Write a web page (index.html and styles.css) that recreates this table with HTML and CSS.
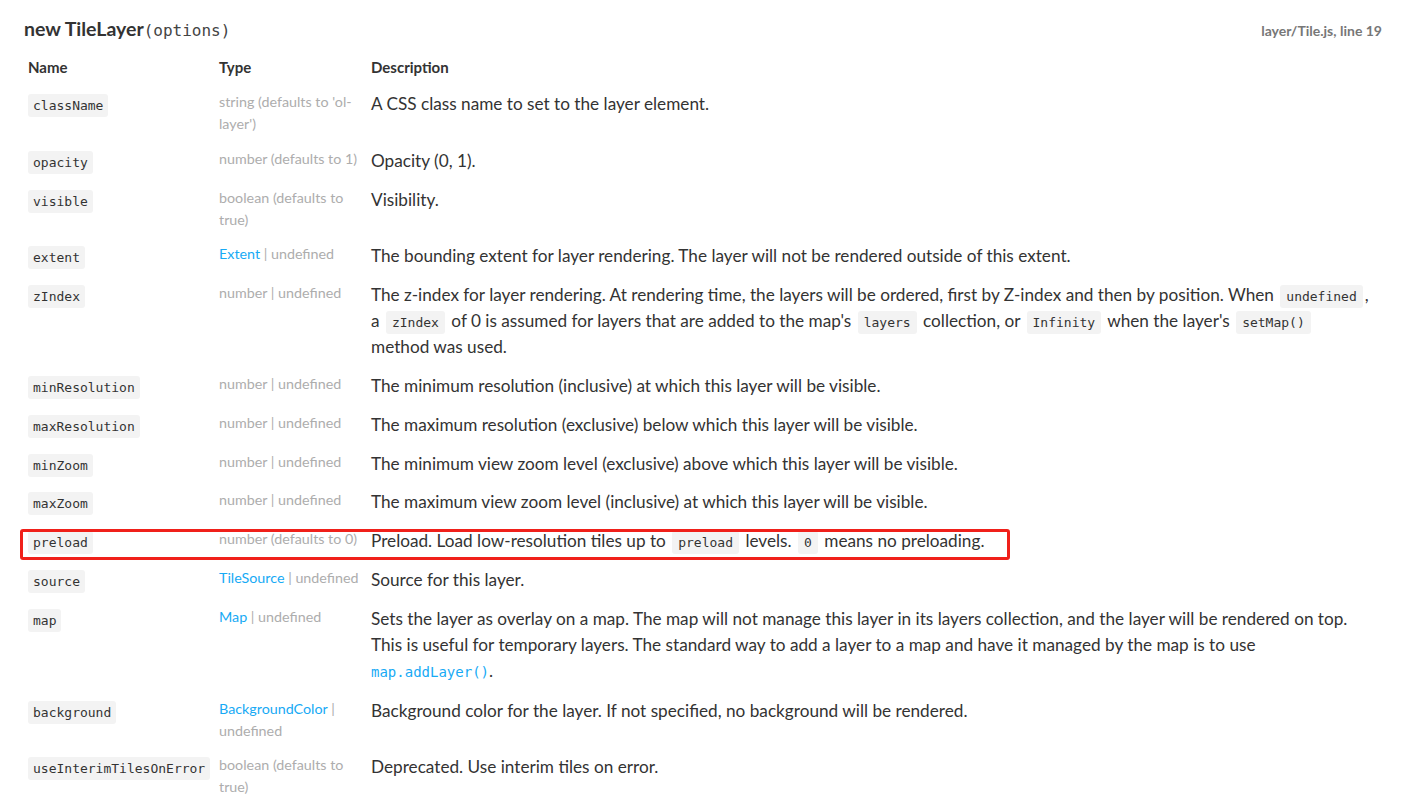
FILE: index.html
```html
<!DOCTYPE html>
<html lang="en">
  <head>
    <meta charset="UTF-8" />
    <title>TileLayer</title>
    <link rel="stylesheet" href="styles.css">
  </head>
  <body>
    <div id="container">
      <div class="head">
        <h4 class="name">new TileLayer<span class="signature">(options)</span></h4>
        <span class="tag-source">layer/Tile.js, line 19</span>
      </div>
      <div class="params">
        <table>
          <thead>
            <tr>
              <th class="col-name">Name</th>
              <th class="col-type">Type</th>
              <th>Description</th>
            </tr>
          </thead>
          <tbody>
            <tr>
              <td><code>className</code></td>
              <td class="type">string (defaults to 'ol-layer')</td>
              <td class="desc">A CSS class name to set to the layer element.</td>
            </tr>
            <tr>
              <td><code>opacity</code></td>
              <td class="type">number (defaults to 1)</td>
              <td class="desc">Opacity (0, 1).</td>
            </tr>
            <tr>
              <td><code>visible</code></td>
              <td class="type">boolean (defaults to true)</td>
              <td class="desc">Visibility.</td>
            </tr>
            <tr>
              <td><code>extent</code></td>
              <td class="type"><a href="#">Extent</a> | undefined</td>
              <td class="desc">The bounding extent for layer rendering. The layer will not be rendered outside of this extent.</td>
            </tr>
            <tr>
              <td><code>zIndex</code></td>
              <td class="type">number | undefined</td>
              <td class="desc">The z-index for layer rendering. At rendering time, the layers will be ordered, first by Z-index and then by position. When <code>undefined</code>, a <code>zIndex</code> of 0 is assumed for layers that are added to the map's <code>layers</code> collection, or <code>Infinity</code> when the layer's <code>setMap()</code> method was used.</td>
            </tr>
            <tr>
              <td><code>minResolution</code></td>
              <td class="type">number | undefined</td>
              <td class="desc">The minimum resolution (inclusive) at which this layer will be visible.</td>
            </tr>
            <tr>
              <td><code>maxResolution</code></td>
              <td class="type">number | undefined</td>
              <td class="desc">The maximum resolution (exclusive) below which this layer will be visible.</td>
            </tr>
            <tr>
              <td><code>minZoom</code></td>
              <td class="type">number | undefined</td>
              <td class="desc">The minimum view zoom level (exclusive) above which this layer will be visible.</td>
            </tr>
            <tr>
              <td><code>maxZoom</code></td>
              <td class="type">number | undefined</td>
              <td class="desc">The maximum view zoom level (inclusive) at which this layer will be visible.</td>
            </tr>
            <tr>
              <td><code>preload</code></td>
              <td class="type">number (defaults to 0)</td>
              <td class="desc">Preload. Load low-resolution tiles up to <code>preload</code> levels. <code>0</code> means no preloading.</td>
            </tr>
            <tr>
              <td><code>source</code></td>
              <td class="type"><a href="#">TileSource</a> | undefined</td>
              <td class="desc">Source for this layer.</td>
            </tr>
            <tr>
              <td><code>map</code></td>
              <td class="type"><a href="#">Map</a> | undefined</td>
              <td class="desc">Sets the layer as overlay on a map. The map will not manage this layer in its layers collection, and the layer will be rendered on top. This is useful for temporary layers. The standard way to add a layer to a map and have it managed by the map is to use <a href="#" class="code-link">map.addLayer()</a>.</td>
            </tr>
            <tr>
              <td><code>background</code></td>
              <td class="type"><a href="#">BackgroundColor</a> | undefined</td>
              <td class="desc">Background color for the layer. If not specified, no background will be rendered.</td>
            </tr>
            <tr>
              <td><code>useInterimTilesOnError</code></td>
              <td class="type">boolean (defaults to true)</td>
              <td class="desc">Deprecated. Use interim tiles on error.</td>
            </tr>
          </tbody>
        </table>
        <div class="highlight"></div>
      </div>
    </div>
  </body>
</html>
```

FILE: styles.css
```css
body {
  margin: 0;
  background: #fff;
  color: #333;
  font-family: "Lato", "Open Sans", sans-serif;
  overflow: hidden;
}

#container {
  padding: 0 29px 0 24px;
}

.head {
  display: flex;
  justify-content: space-between;
  align-items: baseline;
  padding-top: 17px;
}

.name {
  margin: 0;
  font-size: 19.5px;
  font-weight: 700;
  color: #333;
}

.signature {
  font-family: "DejaVu Sans Mono", monospace;
  font-weight: 400;
  font-size: 16px;
  color: #444;
}

.tag-source {
  font-size: 14px;
  font-weight: 700;
  color: #777;
}

.params {
  position: relative;
  margin-top: 12px;
}

table {
  border-collapse: collapse;
  width: 100%;
}

th {
  text-align: left;
  font-size: 15px;
  font-weight: 700;
  color: #333;
  padding: 4px 4px 7px;
  line-height: 22px;
}

.col-name {
  width: 183px;
}

.col-type {
  width: 144px;
}

td {
  vertical-align: top;
  padding: 6px 4px 6.8px;
  line-height: 26px;
}

td.type {
  font-size: 14.3px;
  line-height: 22px;
  color: #adadad;
}

td.desc {
  font-size: 17.2px;
  line-height: 26px;
  color: #333;
  padding-right: 8px;
}

a {
  color: #17aaf5;
  text-decoration: none;
}

code {
  font-family: "DejaVu Sans Mono", monospace;
  font-size: 13px;
  line-height: 1;
  background: #f3f3f3;
  color: #333;
  border-radius: 3px;
  padding: 4px 5px;
}

td.desc code {
  padding: 4px 6px;
  margin: 0 2px;
}

.code-link {
  font-family: "DejaVu Sans Mono", monospace;
  font-size: 14px;
}

.highlight {
  position: absolute;
  left: -4px;
  top: 477px;
  width: 984px;
  height: 25px;
  border: 3px solid #f0201a;
  border-radius: 3px;
}
```
